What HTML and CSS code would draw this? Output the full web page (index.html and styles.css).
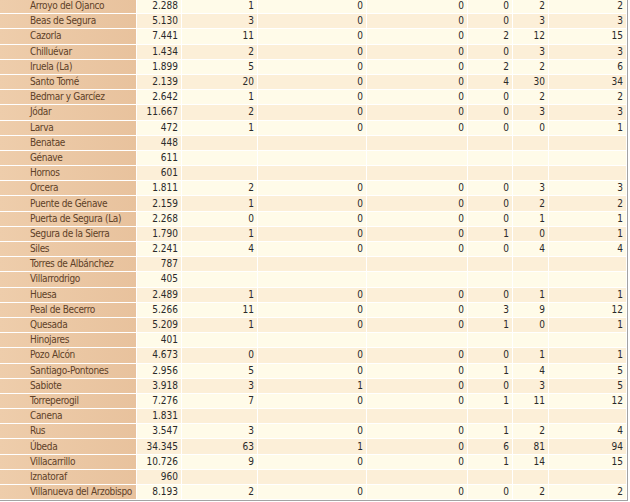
FILE: index.html
```html
<!DOCTYPE html>
<html lang="es">
<head>
<meta charset="utf-8">
<title>Municipios</title>
<link rel="stylesheet" href="styles.css">
</head>
<body>
<table class="data">
<colgroup>
<col class="c-name"><col class="c-pop"><col class="c-a"><col class="c-b"><col class="c-c"><col class="c-d"><col class="c-e"><col class="c-f">
</colgroup>
<tbody>
<tr><td class="name">Arroyo del Ojanco</td><td>2.288</td><td>1</td><td>0</td><td>0</td><td>0</td><td>2</td><td>2</td></tr>
<tr><td class="name">Beas de Segura</td><td>5.130</td><td>3</td><td>0</td><td>0</td><td>0</td><td>3</td><td>3</td></tr>
<tr><td class="name">Cazorla</td><td>7.441</td><td>11</td><td>0</td><td>0</td><td>2</td><td>12</td><td>15</td></tr>
<tr><td class="name">Chilluévar</td><td>1.434</td><td>2</td><td>0</td><td>0</td><td>0</td><td>3</td><td>3</td></tr>
<tr><td class="name">Iruela (La)</td><td>1.899</td><td>5</td><td>0</td><td>0</td><td>2</td><td>2</td><td>6</td></tr>
<tr><td class="name">Santo Tomé</td><td>2.139</td><td>20</td><td>0</td><td>0</td><td>4</td><td>30</td><td>34</td></tr>
<tr><td class="name">Bedmar y Garcíez</td><td>2.642</td><td>1</td><td>0</td><td>0</td><td>0</td><td>2</td><td>2</td></tr>
<tr><td class="name">Jódar</td><td>11.667</td><td>2</td><td>0</td><td>0</td><td>0</td><td>3</td><td>3</td></tr>
<tr><td class="name">Larva</td><td>472</td><td>1</td><td>0</td><td>0</td><td>0</td><td>0</td><td>1</td></tr>
<tr><td class="name">Benatae</td><td>448</td><td></td><td></td><td></td><td></td><td></td><td></td></tr>
<tr><td class="name">Génave</td><td>611</td><td></td><td></td><td></td><td></td><td></td><td></td></tr>
<tr><td class="name">Hornos</td><td>601</td><td></td><td></td><td></td><td></td><td></td><td></td></tr>
<tr><td class="name">Orcera</td><td>1.811</td><td>2</td><td>0</td><td>0</td><td>0</td><td>3</td><td>3</td></tr>
<tr><td class="name">Puente de Génave</td><td>2.159</td><td>1</td><td>0</td><td>0</td><td>0</td><td>2</td><td>2</td></tr>
<tr><td class="name">Puerta de Segura (La)</td><td>2.268</td><td>0</td><td>0</td><td>0</td><td>0</td><td>1</td><td>1</td></tr>
<tr><td class="name">Segura de la Sierra</td><td>1.790</td><td>1</td><td>0</td><td>0</td><td>1</td><td>0</td><td>1</td></tr>
<tr><td class="name">Siles</td><td>2.241</td><td>4</td><td>0</td><td>0</td><td>0</td><td>4</td><td>4</td></tr>
<tr><td class="name">Torres de Albánchez</td><td>787</td><td></td><td></td><td></td><td></td><td></td><td></td></tr>
<tr><td class="name">Villarrodrigo</td><td>405</td><td></td><td></td><td></td><td></td><td></td><td></td></tr>
<tr><td class="name">Huesa</td><td>2.489</td><td>1</td><td>0</td><td>0</td><td>0</td><td>1</td><td>1</td></tr>
<tr><td class="name">Peal de Becerro</td><td>5.266</td><td>11</td><td>0</td><td>0</td><td>3</td><td>9</td><td>12</td></tr>
<tr><td class="name">Quesada</td><td>5.209</td><td>1</td><td>0</td><td>0</td><td>1</td><td>0</td><td>1</td></tr>
<tr><td class="name">Hinojares</td><td>401</td><td></td><td></td><td></td><td></td><td></td><td></td></tr>
<tr><td class="name">Pozo Alcón</td><td>4.673</td><td>0</td><td>0</td><td>0</td><td>0</td><td>1</td><td>1</td></tr>
<tr><td class="name">Santiago-Pontones</td><td>2.956</td><td>5</td><td>0</td><td>0</td><td>1</td><td>4</td><td>5</td></tr>
<tr><td class="name">Sabiote</td><td>3.918</td><td>3</td><td>1</td><td>0</td><td>0</td><td>3</td><td>5</td></tr>
<tr><td class="name">Torreperogil</td><td>7.276</td><td>7</td><td>0</td><td>0</td><td>1</td><td>11</td><td>12</td></tr>
<tr><td class="name">Canena</td><td>1.831</td><td></td><td></td><td></td><td></td><td></td><td></td></tr>
<tr><td class="name">Rus</td><td>3.547</td><td>3</td><td>0</td><td>0</td><td>1</td><td>2</td><td>4</td></tr>
<tr><td class="name">Úbeda</td><td>34.345</td><td>63</td><td>1</td><td>0</td><td>6</td><td>81</td><td>94</td></tr>
<tr><td class="name">Villacarrillo</td><td>10.726</td><td>9</td><td>0</td><td>0</td><td>1</td><td>14</td><td>15</td></tr>
<tr><td class="name">Iznatoraf</td><td>960</td><td></td><td></td><td></td><td></td><td></td><td></td></tr>
<tr><td class="name">Villanueva del Arzobispo</td><td>8.193</td><td>2</td><td>0</td><td>0</td><td>0</td><td>2</td><td>2</td></tr>
</tbody>
</table>
</body>
</html>
```

FILE: styles.css
```css
html, body {
  margin: 0;
  padding: 0;
  background: #ffffff;
  overflow: hidden;
}

.data {
  margin: -2px 0 0 -1px;
  border-collapse: separate;
  border-spacing: 1px;
  table-layout: fixed;
  width: 629px;
  background: #ffffff;
  border-right: 1px solid #a3a3a3;
  border-bottom: 1px solid #a3a3a3;
  font-family: "DejaVu Sans Condensed", "DejaVu Sans", sans-serif;
  font-size: 10px;
  color: #2a2a2a;
}

.c-name { width: 136px; }
.c-pop { width: 44px; }
.c-a { width: 75px; }
.c-b { width: 108px; }
.c-c { width: 100px; }
.c-d { width: 44px; }
.c-e { width: 35px; }
.c-f { width: 77px; }

.data td {
  box-sizing: border-box;
  height: 14.19px;
  padding: 0 3px 0 0;
  line-height: 14px;
  text-align: right;
  white-space: nowrap;
  overflow: hidden;
  vertical-align: middle;
}

.data tr:nth-child(odd) td {
  background: #fffbe9;
}

.data tr:nth-child(even) td {
  background: #fcefd8;
}

.data tr td.name {
  text-align: left;
  padding: 0 0 0 30px;
  letter-spacing: -0.35px;
  color: #5e4128;
  background: linear-gradient(to right, #eecdab, #e8c29d);
}
```
